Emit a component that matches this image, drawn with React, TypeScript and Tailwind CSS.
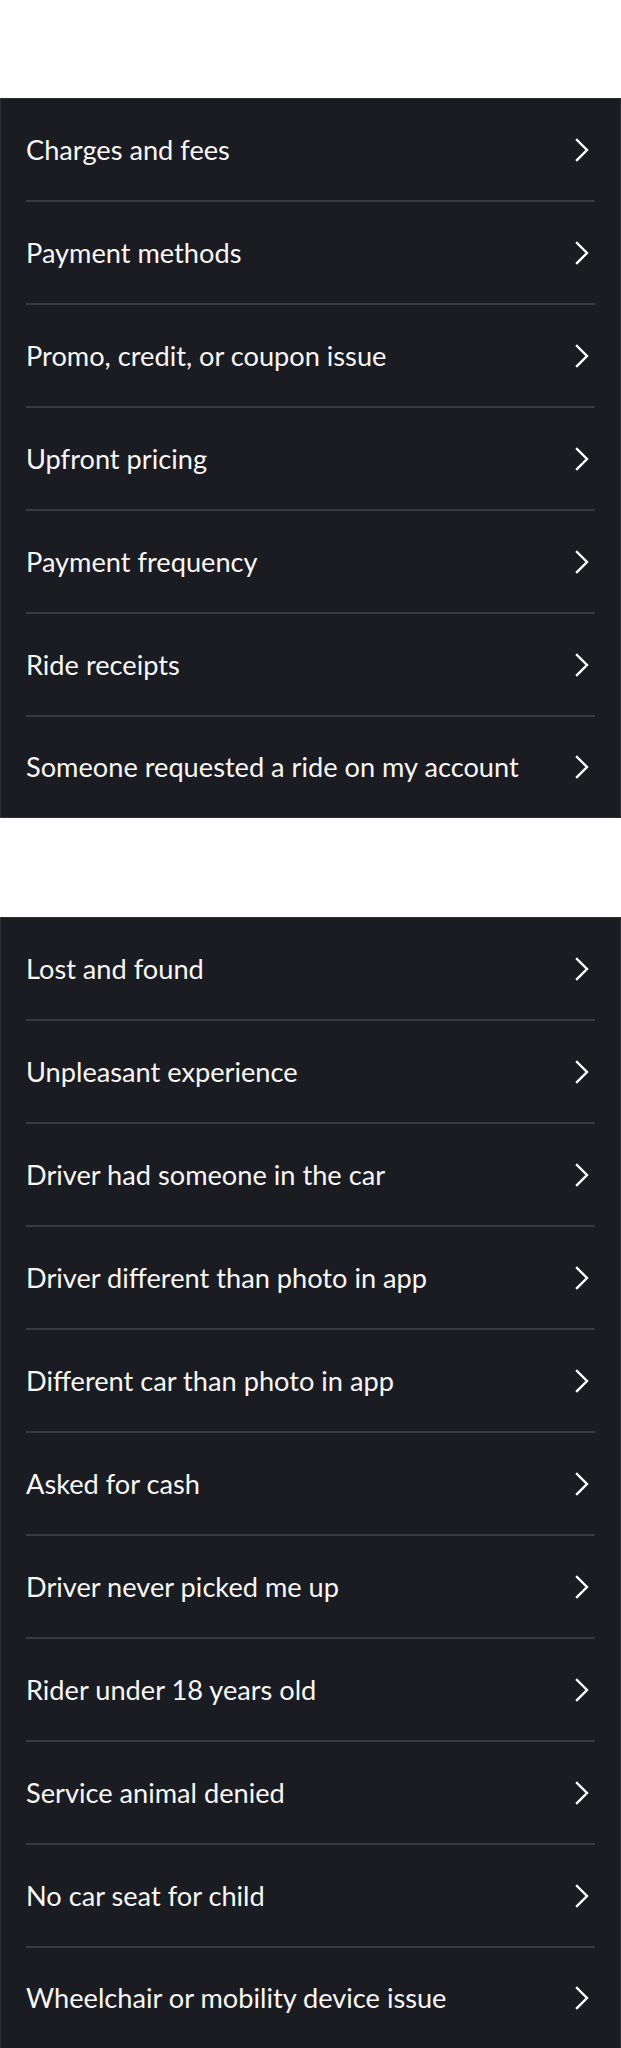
import React from "react";

const group1 = [
  "Charges and fees",
  "Payment methods",
  "Promo, credit, or coupon issue",
  "Upfront pricing",
  "Payment frequency",
  "Ride receipts",
  "Someone requested a ride on my account",
];

const group2 = [
  "Lost and found",
  "Unpleasant experience",
  "Driver had someone in the car",
  "Driver different than photo in app",
  "Different car than photo in app",
  "Asked for cash",
  "Driver never picked me up",
  "Rider under 18 years old",
  "Service animal denied",
  "No car seat for child",
  "Wheelchair or mobility device issue",
];

function Chevron() {
  return (
    <svg width="14" height="24" viewBox="0 0 14 24" fill="none" className="shrink-0">
      <path d="M2 2 L12 12 L2 22" stroke="#ffffff" strokeWidth="2.4" strokeLinecap="square" strokeLinejoin="miter" />
    </svg>
  );
}

function Panel({ items }: { items: string[] }) {
  return (
    <div className="bg-[#1b1b22] border border-[#2e2f36]">
      {items.map((t, i) => (
        <div key={t} className="px-[25px]">
          <div
            className={
              "flex items-center justify-between pr-[6px] " +
              (i < items.length - 1 ? "border-b-2 border-[#3a3b41] h-[103px]" : "h-[100px]")
            }
          >
            <span className="text-[27.2px] text-[#f7f7f7] leading-none">{t}</span>
            <Chevron />
          </div>
        </div>
      ))}
    </div>
  );
}

export default function App() {
  return (
    <div className="w-[621px] bg-white" style={{ fontFamily: "Lato, 'Liberation Sans', sans-serif" }}>
      <div className="h-[98px]" />
      <Panel items={group1} />
      <div className="h-[99px]" />
      <Panel items={group2} />
    </div>
  );
}
